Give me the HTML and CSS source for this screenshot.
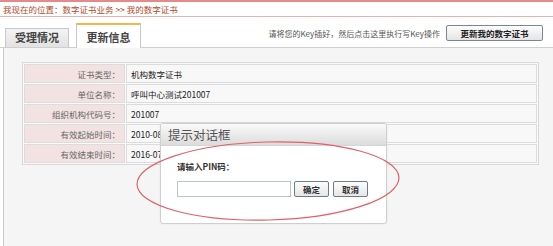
FILE: index.html
```html
<!DOCTYPE html>
<html lang="zh">
<head>
<meta charset="utf-8">
<link rel="stylesheet" href="styles.css">
</head>
<body>
<div class="page">
  <div class="breadcrumb">我现在的位置：数字证书业务 &gt;&gt; 我的数字证书</div>
  <div class="tabbar">
    <div class="tab">受理情况</div>
    <div class="tab active">更新信息</div>
    <div class="actions">
      <span class="hint">请将您的Key插好，然后点击这里执行写Key操作</span>
      <button class="btn-update">更新我的数字证书</button>
    </div>
  </div>
  <div class="content">
    <table class="info">
      <tr><th>证书类型：</th><td>机构数字证书</td></tr>
      <tr><th>单位名称：</th><td>呼叫中心测试201007</td></tr>
      <tr><th>组织机构代码号：</th><td>201007</td></tr>
      <tr><th>有效起始时间：</th><td>2010-08-01</td></tr>
      <tr><th>有效结束时间：</th><td>2016-07-31</td></tr>
    </table>
  </div>
  <div class="dialog">
    <div class="dialog-title">提示对话框</div>
    <div class="dialog-body">
      <div class="pin-label">请输入PIN码：</div>
      <div class="pin-row">
        <input class="pin-input" type="password">
        <button class="dbtn">确定</button>
        <button class="dbtn">取消</button>
      </div>
    </div>
  </div>
  <svg class="ellipse" width="553" height="246" viewBox="0 0 553 246">
    <ellipse cx="268" cy="181" rx="131" ry="39" transform="rotate(-1.5 268 181)" fill="none" stroke="#e0606a" stroke-width="1.2"/>
  </svg>
</div>
</body>
</html>
```
FILE: styles.css
```css
* { box-sizing: border-box; }
html, body { margin: 0; padding: 0; background: #fff; }
body {
  font-family: "Noto Sans CJK SC", "Liberation Sans", sans-serif;
  width: 553px;
  height: 246px;
  overflow: hidden;
}
.page {
  position: relative;
  width: 553px;
  height: 246px;
  display: flex;
  flex-direction: column;
  border-top: 2px solid #e58a8a;
}
.breadcrumb {
  height: 15px;
  font-size: 8.5px;
  line-height: 15px;
  color: #b04a2a;
  padding-left: 3px;
  border-bottom: 1px solid #eab0b0;
}
.tabbar {
  height: 31px;
  display: flex;
  align-items: flex-end;
  padding-left: 5px;
  border-bottom: 1px solid #cfcfcf;
}
.tab {
  width: 64px;
  height: 19px;
  border: 1px solid #c8c8c8;
  border-bottom: none;
  background: linear-gradient(#f4f4f4, #e2e2e2);
  font-size: 11px;
  font-weight: bold;
  color: #444;
  display: flex;
  align-items: center;
  justify-content: center;
  padding-bottom: 2px;
}
.tab.active {
  margin-left: 7px;
  width: 65px;
  height: 25px;
  background: #fff;
  border-top: 2px solid #f0b848;
  margin-bottom: -1px;
  padding-bottom: 0;
}
.actions {
  margin-left: auto;
  align-self: center;
  display: flex;
  align-items: center;
  gap: 6px;
  padding-right: 10px;
  padding-top: 2px;
}
.hint {
  font-size: 8px;
  color: #555;
}
.btn-update {
  width: 97px;
  height: 16px;
  font-family: inherit;
  font-size: 8.5px;
  font-weight: bold;
  color: #222;
  padding: 0;
  border: 1px solid #7a8694;
  border-radius: 2px;
  background: linear-gradient(#fdfdfd, #e4e4e4);
}
.content {
  flex: 1;
  margin-left: 3px;
  border-left: 1px solid #c8c8c8;
  background: #f5f5f5;
  padding: 14px 0 0 18px;
}
.info {
  width: 517px;
  border-collapse: separate;
  border-spacing: 1px;
  border: 1px solid #d8d8d8;
  background: #fafafa;
  font-size: 8.5px;
  color: #333;
}
.info th, .info td {
  height: 19px;
  padding: 0 4px;
  border: 1px solid #dcdcdc;
  font-weight: normal;
}
.info th {
  width: 101px;
  text-align: right;
  background: #f2e2e2;
  color: #666;
}
.info td {
  background: #f8f8f8;
  color: #222;
}
.dialog {
  position: absolute;
  left: 160px;
  top: 121px;
  width: 227px;
  height: 101px;
  border: 1px solid #cfcfcf;
  border-radius: 3px;
  background: #fff;
  box-shadow: 0 0 2px rgba(0,0,0,0.08);
  display: flex;
  flex-direction: column;
  overflow: hidden;
}
.dialog-title {
  height: 22px;
  padding-left: 7px;
  font-size: 12.5px;
  line-height: 22px;
  color: #555;
  background: linear-gradient(#fafafa, #dcdcdc);
  border-bottom: 1px solid #d4d4d4;
}
.dialog-body {
  padding: 14px 0 0 16px;
}
.pin-label {
  font-size: 8.5px;
  font-weight: bold;
  color: #333;
  height: 12px;
  line-height: 12px;
}
.pin-row {
  display: flex;
  gap: 3px;
  margin-top: 9px;
}
.pin-input {
  width: 114px;
  height: 16px;
  border: 1px solid #b8c4d0;
  background: #fff;
  padding: 0;
}
.dbtn {
  height: 16px;
  width: 35px;
  padding: 0;
  font-family: inherit;
  font-size: 8.5px;
  font-weight: bold;
  color: #333;
  border: 1px solid #6e7b88;
  border-radius: 2px;
  background: linear-gradient(#fdfdfd, #e6e6e6);
}
.dbtn + .dbtn { margin-left: 1px; }
.ellipse {
  position: absolute;
  left: 0;
  top: -2px;
  pointer-events: none;
}
```
